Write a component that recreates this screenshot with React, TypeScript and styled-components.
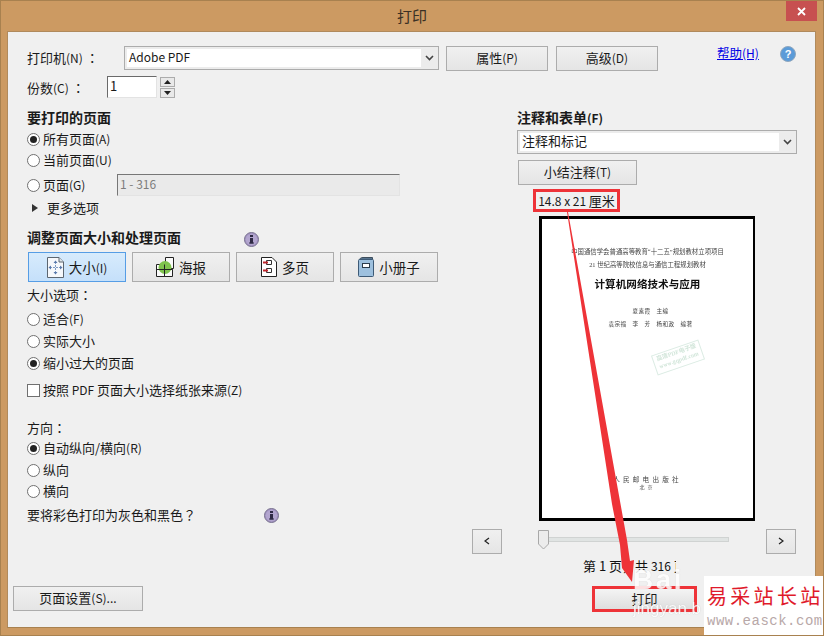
import React from "react";
import styled, { createGlobalStyle } from "styled-components";

const Global = createGlobalStyle`
  html, body { margin: 0; padding: 0; background: #cc9a62; }
  body {
    font-family: "Noto Sans CJK SC", "Noto Sans", sans-serif;
    font-size: 13px;
    color: #1a1a1a;
  }
`;

const Frame = styled.div`
  position: relative;
  width: 824px;
  height: 636px;
  display: flex;
  flex-direction: column;
  box-sizing: border-box;
  background: #cc9a62;
  border: 1px solid #a8814f;
  overflow: hidden;
`;

const TitleBar = styled.div`
  position: relative;
  height: 30px;
  flex: none;
  display: flex;
  align-items: center;
  justify-content: center;
  font-size: 15px;
  color: #3a3024;
  padding-bottom: 1px;
  box-sizing: border-box;
`;

const CloseBox = styled.div`
  position: absolute;
  top: 0;
  right: 6px;
  width: 31px;
  height: 20px;
  background: #c75050;
  display: flex;
  align-items: center;
  justify-content: center;
`;

const Client = styled.div`
  flex: 1;
  margin: 0 7px 7px 6px;
  background: #f0f0f0;
  border: 1px solid #b08a5c;
  border-bottom-color: #a8814f;
  padding: 14px 19px 15px 19px;
  display: flex;
  flex-direction: column;
  min-height: 0;
`;

const TopRow = styled.div`
  display: flex;
  align-items: flex-start;
  height: 25px;
`;

const Label = styled.div<{ $w?: number }>`
  width: ${(p) => (p.$w ? `${p.$w}px` : "auto")};
  flex: none;
  line-height: 23px;
  white-space: nowrap;
`;

// the dialog's Latin text runs a size smaller than its Chinese text
const Small = styled.span`
  font-size: 12px;
`;

// full-width colon and question mark sit centred in the cell, as in the TC glyphs
const Punct = styled.span`
  font-family: "Noto Sans CJK TC", "Noto Sans CJK SC", sans-serif;
`;

const Combo = styled.div<{ $w: number; $h: number; $mt?: number }>`
  width: ${(p) => p.$w}px;
  height: ${(p) => p.$h}px;
  margin-top: ${(p) => p.$mt ?? 0}px;
  flex: none;
  box-sizing: border-box;
  border: 1px solid #acacac;
  display: flex;
  background: #ececec;
`;

const ComboText = styled.div`
  flex: 1;
  margin: 2px 0 2px 2px;
  background: #fff;
  padding: 0 0 3px 2px;
  display: flex;
  align-items: center;
  font-size: 13px;
`;

const ComboArrow = styled.div`
  width: 17px;
  flex: none;
  display: flex;
  align-items: center;
  justify-content: center;
`;

const Btn = styled.div<{ $w: number; $h?: number; $ml?: number; $mt?: number }>`
  width: ${(p) => p.$w}px;
  height: ${(p) => p.$h ?? 25}px;
  margin-left: ${(p) => p.$ml ?? 0}px;
  margin-top: ${(p) => p.$mt ?? 0}px;
  flex: none;
  box-sizing: border-box;
  border: 1px solid #acacac;
  background: linear-gradient(#f0f0f0, #e5e5e5);
  padding-bottom: 2px;
  display: flex;
  align-items: center;
  justify-content: center;
  white-space: nowrap;
`;

const HelpLink = styled.a`
  margin-left: 59px;
  color: #0000e6;
  text-decoration: underline;
  line-height: 14px;
  width: 43px;
  font-size: 12.5px;
  white-space: nowrap;
`;

const HelpIcon = styled.div`
  margin-left: 21px;
  width: 16px;
  height: 16px;
`;

const CopiesRow = styled.div`
  display: flex;
  align-items: center;
  height: 22px;
  margin-top: 5px;
`;

const NumberBox = styled.div`
  width: 50px;
  height: 22px;
  box-sizing: border-box;
  background: #fff;
  border: 1px solid #e3e3e3;
  border-top-color: #6a6a6a;
  border-left-color: #6a6a6a;
  padding-left: 2px;
  line-height: 18px;
`;

const Spinner = styled.div`
  display: flex;
  flex-direction: column;
  gap: 1px;
  margin-left: 3px;
`;

const SpinBtn = styled.div`
  width: 15px;
  height: 10px;
  box-sizing: border-box;
  border: 1px solid #acacac;
  background: #e9e9e9;
  display: flex;
  align-items: center;
  justify-content: center;
`;

const Body = styled.div`
  flex: 1;
  display: flex;
  margin-top: 10px;
  min-height: 0;
`;

const LeftCol = styled.div`
  width: 445px;
  flex: none;
  display: flex;
  flex-direction: column;
`;

const RightCol = styled.div`
  flex: 1;
  display: flex;
  flex-direction: column;
`;

const Heading = styled.div<{ $mt?: number }>`
  height: 20px;
  box-sizing: border-box;
  padding-bottom: 2px;
  margin-top: ${(p) => p.$mt ?? 0}px;
  font-size: 14px;
  font-weight: 700;
  display: flex;
  align-items: center;
  white-space: nowrap;
`;

const Line = styled.div<{ $mt?: number; $h?: number }>`
  height: ${(p) => p.$h ?? 20}px;
  box-sizing: border-box;
  padding-bottom: 2px;
  margin-top: ${(p) => p.$mt ?? 0}px;
  display: flex;
  align-items: center;
  white-space: nowrap;
`;

const Radio = styled.span<{ $on?: boolean }>`
  width: 13px;
  height: 13px;
  box-sizing: border-box;
  flex: none;
  border-radius: 50%;
  background: #fff;
  border: 1px solid #707070;
  margin: 2px 3px 0 0;
  display: flex;
  align-items: center;
  justify-content: center;
  &::after {
    content: "";
    display: ${(p) => (p.$on ? "block" : "none")};
    width: 7px;
    height: 7px;
    border-radius: 50%;
    background: #222;
  }
`;

const Check = styled.span`
  width: 13px;
  height: 13px;
  box-sizing: border-box;
  flex: none;
  background: #fff;
  border: 1px solid #707070;
  margin: 2px 3px 0 0;
`;

const RangeLabel = styled.span`
  width: 74px;
  flex: none;
`;

const RangeBox = styled.div`
  width: 283px;
  height: 22px;
  margin-top: 2px;
  box-sizing: border-box;
  background: #eaeaea;
  border: 1px solid #e3e3e3;
  border-top-color: #777;
  border-left-color: #777;
  padding-left: 2px;
  color: #7d7d7d;
  font-size: 12px;
  line-height: 18px;
`;

const Triangle = styled.span`
  width: 0;
  height: 0;
  margin: 2px 9px 0 5px;
  border-left: 6px solid #333;
  border-top: 4px solid transparent;
  border-bottom: 4px solid transparent;
`;

const Tabs = styled.div`
  display: flex;
  gap: 6px;
  margin-top: 4px;
  margin-left: 1px;
`;

const Tab = styled.div<{ $active?: boolean }>`
  width: 98px;
  height: 30px;
  box-sizing: border-box;
  border: 1px solid ${(p) => (p.$active ? "#569de5" : "#acacac")};
  background: ${(p) =>
    p.$active ? "linear-gradient(#d7ebfc, #c5e0fa)" : "linear-gradient(#f0f0f0, #e5e5e5)"};
  display: flex;
  align-items: center;
  justify-content: center;
  gap: 5px;
  font-size: 13.5px;
  white-space: nowrap;
`;

const InfoWrap = styled.span<{ $ml: number }>`
  margin-left: ${(p) => p.$ml}px;
  margin-top: 2px;
  width: 15px;
  height: 15px;
  display: block;
`;

const PanelIndent = styled.div`
  padding-left: 45px;
  display: flex;
  flex-direction: column;
  align-items: flex-start;
`;

const SizeTag = styled.div`
  margin: 4px 0 0 16px;
  width: 87px;
  height: 23px;
  box-sizing: border-box;
  border: 3px solid #ee3338;
  padding-bottom: 1px;
  display: flex;
  align-items: center;
  justify-content: center;
  white-space: nowrap;
`;

const Sheet = styled.div`
  margin: 4px 0 0 22px;
  width: 216px;
  height: 305px;
  box-sizing: border-box;
  border: 3px solid #000;
  border-right-width: 2px;
  background: #fff;
  padding-top: 30px;
  display: flex;
  flex-direction: column;
  align-items: center;
  position: relative;
  font-family: "Liberation Serif", "Noto Sans CJK SC", serif;
  color: #333;
  filter: blur(0.25px);
`;

const SheetLine = styled.div<{ $size?: number; $mt?: number; $ml?: number; $bold?: boolean; $ls?: number }>`
  font-size: ${(p) => p.$size ?? 6.4}px;
  margin-top: ${(p) => p.$mt ?? 0}px;
  margin-left: ${(p) => p.$ml ?? 0}px;
  font-weight: ${(p) => (p.$bold ? 700 : 400)};
  letter-spacing: ${(p) => p.$ls ?? 0}px;
  line-height: 1;
  white-space: nowrap;
  color: ${(p) => (p.$bold ? "#111" : "#444")};
`;

const Stamp = styled.div`
  position: absolute;
  left: 111px;
  top: 128px;
  width: 48px;
  height: 19px;
  transform: rotate(-19deg);
  border: 1px solid #dcece4;
  color: #d2e6da;
  font-size: 6px;
  line-height: 8px;
  text-align: center;
  font-weight: 700;
  white-space: nowrap;
  overflow: hidden;
`;

const Pager = styled.div`
  display: flex;
  align-items: center;
  margin-top: 8px;
  height: 25px;
`;

const SlideWrap = styled.div`
  width: 192px;
  margin: 0 36px 0 36px;
  height: 25px;
  position: relative;
`;

const Track = styled.div`
  position: absolute;
  left: 5px;
  right: 1px;
  top: 8px;
  height: 3px;
  background: #e0e4e3;
  border: 1px solid #d0d3d2;
`;

const Thumb = styled.svg`
  position: absolute;
  left: 0;
  top: 1px;
`;

const PageCount = styled.div`
  margin: 2px 0 0 111px;
  height: 20px;
  line-height: 20px;
  white-space: nowrap;
  color: #111;
`;

const Footer = styled.div`
  display: flex;
  justify-content: space-between;
  align-items: flex-start;
  height: 26px;
  margin-left: -14px;
  padding-right: 99px;
`;

const PrintBtn = styled(Btn)`
  border: 3px solid #ee3338;
  height: 26px;
  background: linear-gradient(#f4f4f4, #dedede);
`;

const ArrowLayer = styled.svg`
  position: absolute;
  left: -1px;
  top: -1px;
  pointer-events: none;
`;

const CountPatch = styled.div`
  position: absolute;
  left: 675px;
  top: 556px;
  width: 18px;
  height: 19px;
  background: #f0f0f0;
`;

const BaiduMark = styled.div`
  position: absolute;
  left: 632px;
  top: 561px;
  color: #fff;
  font-family: "Liberation Sans", sans-serif;
  font-weight: 700;
  font-size: 28px;
  line-height: 36px;
  letter-spacing: 2.5px;
  opacity: 0.85;
  text-shadow: 0 0 1px #c4c4c4;
  pointer-events: none;
`;

const BaiduSub = styled.div`
  position: absolute;
  left: 632px;
  top: 597px;
  color: #fff;
  font-family: "Liberation Sans", sans-serif;
  font-size: 17px;
  line-height: 22px;
  opacity: 0.85;
  text-shadow: 0 0 1px #b0b0b0;
  pointer-events: none;
`;

const SiteMark = styled.div`
  position: absolute;
  right: -1px;
  bottom: -1px;
  width: 120px;
  height: 60px;
  background: #fff;
  box-sizing: border-box;
  padding: 6px 0 0 3px;
  overflow: hidden;
`;

const SiteName = styled.div`
  font-family: "Liberation Serif", "Noto Sans CJK SC", serif;
  font-size: 20px;
  line-height: 30px;
  letter-spacing: 3.3px;
  color: #e01a2b;
  white-space: nowrap;
`;

const SiteUrl = styled.div`
  font-family: "Liberation Mono", monospace;
  font-size: 14px;
  line-height: 18px;
  letter-spacing: 0.5px;
  color: #b8a8a8;
  white-space: nowrap;
`;

function Chevron() {
  return (
    <svg width="9" height="6" viewBox="0 0 9 6">
      <path d="M1 1l3.5 3.5L8 1" fill="none" stroke="#444" strokeWidth="1.6" />
    </svg>
  );
}

function InfoIcon({ ml }: { ml: number }) {
  return (
    <InfoWrap $ml={ml}>
      <svg width="15" height="15" viewBox="0 0 15 15">
        <circle cx="7.5" cy="7.5" r="7" fill="#a596c4" stroke="#77708e" />
        <circle cx="7.5" cy="7.5" r="5.6" fill="#b3a6cf" />
        <rect x="6" y="6" width="3" height="5.5" fill="#2f2a45" />
        <rect x="6" y="3" width="3" height="2" fill="#2f2a45" />
        <rect x="5" y="10.5" width="5" height="1" fill="#2f2a45" />
      </svg>
    </InfoWrap>
  );
}

function SizeIcon() {
  return (
    <svg width="17" height="21" viewBox="0 0 17 21">
      <path d="M.5.5H12L16.5 5v15.5H.5z" fill="#f6f8fb" stroke="#5c6670" />
      <path d="M12 .5V5h4.5" fill="#dfe5ea" stroke="#5c6670" />
      <path d="M8.5 5v11M3 10.5h11" stroke="#7d9ac4" strokeWidth="1" strokeDasharray="2 1" />
      <path d="M6.5 6l2-2.5L10.5 6zM6.5 15l2 2.5 2-2.5zM4 8.5L1.5 10.5 4 12.5zM13 8.5l2.5 2-2.5 2z" fill="#5878ab" />
    </svg>
  );
}

function PosterIcon() {
  return (
    <svg width="18" height="20" viewBox="0 0 18 20">
      <path d="M.5 7.5h8v12h-8zM8.5 12.5h8v7h-8zM9.5 .5h8v11h-8z" fill="#fafafa" stroke="#222" />
      <circle cx="9" cy="10.5" r="6.5" fill="#7fc34e" />
      <path d="M8.5 7.5v12M.5 12.5h16" stroke="#222" fill="none" />
    </svg>
  );
}

function PagesIcon() {
  return (
    <svg width="16" height="20" viewBox="0 0 16 20">
      <path d="M.5.5H11L15.5 5v14.5H.5z" fill="#fff" stroke="#222" />
      <path d="M5.5 3.5h5v4h-5zM5.5 11.5h5v4h-5z" fill="none" stroke="#333" />
      <path d="M2 5.5h5M2 13.5h5" stroke="#c0272d" strokeWidth="2" />
    </svg>
  );
}

function BookIcon() {
  return (
    <svg width="16" height="20" viewBox="0 0 16 20">
      <path d="M1.5 3C1.5 1.5 3 .5 5 .5h9.5V3z" fill="#57748f" stroke="#3d4d5c" />
      <rect x=".5" y="2.5" width="15" height="17" rx="1" fill="#9dc0de" stroke="#3d5a76" />
      <rect x="4.5" y="6.5" width="7" height="4" fill="#fff" stroke="#2a3b4c" />
    </svg>
  );
}

export default function App() {
  return (
    <>
      <Global />
      <Frame>
        <TitleBar>
          打印
          <CloseBox>
            <svg width="9" height="9" viewBox="0 0 9 9">
              <path d="M1 1l7 7M8 1L1 8" stroke="#fff" strokeWidth="1.8" />
            </svg>
          </CloseBox>
        </TitleBar>
        <Client>
          <TopRow>
            <Label $w={97}>打印机<Small>(N)</Small> <Punct>：</Punct></Label>
            <Combo $w={315} $h={24}>
              <ComboText><Small>Adobe PDF</Small></ComboText>
              <ComboArrow>
                <Chevron />
              </ComboArrow>
            </Combo>
            <Btn $w={102} $ml={7}>属性<Small>(P)</Small></Btn>
            <Btn $w={102} $ml={8}>高级<Small>(D)</Small></Btn>
            <HelpLink href="#">帮助<Small>(H)</Small></HelpLink>
            <HelpIcon>
              <svg width="16" height="16" viewBox="0 0 16 16">
                <circle cx="8" cy="8" r="7.5" fill="#5b9bd8" stroke="#8fa6bd" />
                <text x="8" y="12" textAnchor="middle" fontSize="11" fontWeight="700" fill="#fff" fontFamily="Liberation Sans">?</text>
              </svg>
            </HelpIcon>
          </TopRow>
          <CopiesRow>
            <Label $w={80}>份数<Small>(C)</Small> <Punct>：</Punct></Label>
            <NumberBox>1</NumberBox>
            <Spinner>
              <SpinBtn>
                <svg width="7" height="4" viewBox="0 0 7 4"><path d="M3.5 0L7 4H0z" fill="#222" /></svg>
              </SpinBtn>
              <SpinBtn>
                <svg width="7" height="4" viewBox="0 0 7 4"><path d="M0 0h7L3.5 4z" fill="#222" /></svg>
              </SpinBtn>
            </Spinner>
          </CopiesRow>
          <Body>
            <LeftCol>
              <Heading>要打印的页面</Heading>
              <Line $h={21} $mt={1}><Radio $on />所有页面<Small>(A)</Small></Line>
              <Line $h={21}><Radio />当前页面<Small>(U)</Small></Line>
              <Line $h={22} $mt={3}>
                <Radio />
                <RangeLabel>页面<Small>(G)</Small></RangeLabel>
                <RangeBox>1 - 316</RangeBox>
              </Line>
              <Line $h={22} $mt={1}><Triangle />更多选项</Line>
              <Heading $mt={9}>调整页面大小和处理页面<InfoIcon ml={63} /></Heading>
              <Tabs>
                <Tab $active><SizeIcon /><span>大小<Small>(I)</Small></span></Tab>
                <Tab><PosterIcon />海报</Tab>
                <Tab><PagesIcon />多页</Tab>
                <Tab><BookIcon />小册子</Tab>
              </Tabs>
              <Line $mt={3}>大小选项 <Punct>：</Punct></Line>
              <Line $h={22} $mt={3}><Radio />适合<Small>(F)</Small></Line>
              <Line $h={22}><Radio />实际大小</Line>
              <Line $h={22}><Radio $on />缩小过大的页面</Line>
              <Line $h={22} $mt={5}><Check />按照 <Small>&nbsp;PDF&nbsp;</Small> 页面大小选择纸张来源<Small>(Z)</Small></Line>
              <Line $mt={17}>方向 <Punct>：</Punct></Line>
              <Line $h={21}><Radio $on />自动纵向/横向<Small>(R)</Small></Line>
              <Line $h={22}><Radio />纵向</Line>
              <Line $h={21}><Radio />横向</Line>
              <Line $mt={3}>要将彩色打印为灰色和黑色<Punct>？</Punct><InfoIcon ml={68} /></Line>
            </LeftCol>
            <RightCol>
              <PanelIndent>
                <Heading>注释和表单<Small>(F)</Small></Heading>
                <Combo $w={280} $h={24} $mt={2}>
                  <ComboText>注释和标记</ComboText>
                  <ComboArrow>
                    <Chevron />
                  </ComboArrow>
                </Combo>
                <Btn $w={119} $ml={1} $mt={6}>小结注释<Small>(T)</Small></Btn>
                <SizeTag><Small>14.8 x 21&nbsp;</Small>厘米</SizeTag>
                <Sheet>
                  <SheetLine>中国通信学会普通高等教育“十二五”规划教材立项项目</SheetLine>
                  <SheetLine $mt={7}>21 世纪高等院校信息与通信工程规划教材</SheetLine>
                  <SheetLine $mt={11} $size={10.6} $bold>计算机网络技术与应用</SheetLine>
                  <SheetLine $mt={19} $size={5.6} $ls={0.4} $ml={6}>夏素霞　主编</SheetLine>
                  <SheetLine $mt={7} $size={5.6} $ls={0.4} $ml={6}>袁宗福　李　芳　杨和政　编著</SheetLine>
                  <SheetLine $mt={149} $size={6.6} $ls={3.2}>人民邮电出版社</SheetLine>
                  <SheetLine $mt={2} $size={5} $ls={3}>北京</SheetLine>
                  <Stamp>高清PDF电子版<br />www.gqpdf.com</Stamp>
                </Sheet>
              </PanelIndent>
              <Pager>
                <Btn $w={30}>
                  <svg width="6" height="8" viewBox="0 0 6 8"><path d="M5 1L1 4l4 3" fill="none" stroke="#222" strokeWidth="1.2" /></svg>
                </Btn>
                <SlideWrap>
                  <Track />
                  <Thumb width="11" height="20" viewBox="0 0 11 20">
                    <path d="M.5.5h10V14l-5 5-5-5z" fill="#ececec" stroke="#a8a8a8" />
                  </Thumb>
                </SlideWrap>
                <Btn $w={30}>
                  <svg width="6" height="8" viewBox="0 0 6 8"><path d="M1 1l4 3-4 3" fill="none" stroke="#222" strokeWidth="1.2" /></svg>
                </Btn>
              </Pager>
              <PageCount>第 1 页，共 <Small>316</Small> 页</PageCount>
            </RightCol>
          </Body>
          <Footer>
            <Btn $w={130}>页面设置<Small>(S)...</Small></Btn>
            <PrintBtn $w={105}>打印</PrintBtn>
          </Footer>
        </Client>
        <CountPatch />
        <ArrowLayer width="824" height="636" viewBox="0 0 824 636">
          <path
            d="M567 212L568 212L627 540L630 561L634 560L632 582L622 568L620 545L612 504z"
            fill="#ee3338"
          />
        </ArrowLayer>
        <BaiduMark>Bai</BaiduMark>
        <BaiduSub>jingyan.b</BaiduSub>
        <SiteMark>
          <SiteName>易采站长站</SiteName>
          <SiteUrl>www.easck.com</SiteUrl>
        </SiteMark>
      </Frame>
    </>
  );
}
